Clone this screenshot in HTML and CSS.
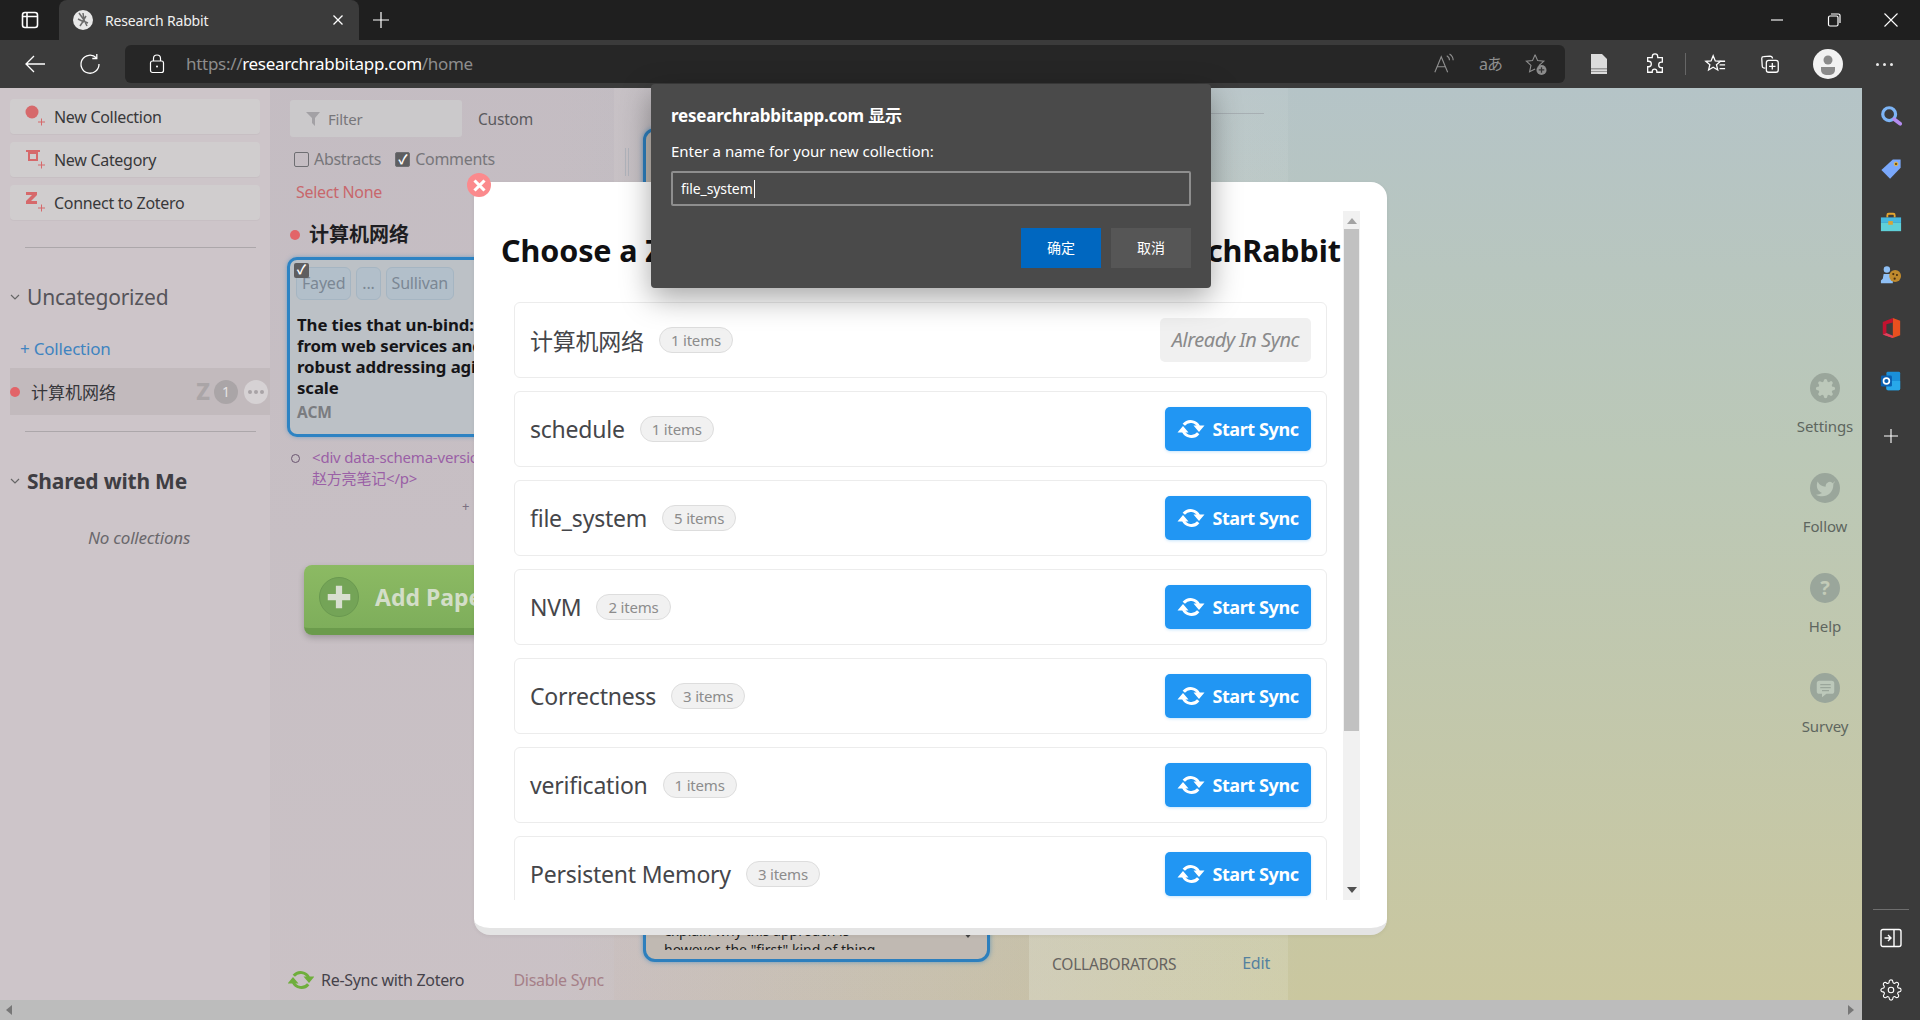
FILE: index.html
```html
<!DOCTYPE html>
<html lang="en">
<head>
<meta charset="utf-8">
<title>Research Rabbit</title>
<link rel="stylesheet" href="styles.css">
</head>
<body>
<svg class="defs" width="0" height="0" aria-hidden="true">
  <symbol id="sync" viewBox="-1 0 26 24">
    <path d="M4.800 7.800A8.800 8.800 0 0 1 19.800 10M19.200 16.200A8.800 8.800 0 0 1 4.200 14" fill="none" stroke="currentColor" stroke-width="3"/>
    <path d="M14.500 8.500h11l-5.500 6.500zM-1.500 15.500h11l-5.500-6.500z" fill="currentColor"/>
  </symbol>
  <symbol id="gear" viewBox="0 0 24 24">
    <path d="M12 15a3 3 0 1 0 0-6 3 3 0 0 0 0 6z"/>
    <path d="M19.400 15a1.650 1.650 0 0 0 .33 1.820l.06.06a2 2 0 0 1 0 2.830 2 2 0 0 1-2.830 0l-.06-.06a1.650 1.650 0 0 0-1.820-.33 1.650 1.650 0 0 0-1 1.510V21a2 2 0 0 1-2 2 2 2 0 0 1-2-2v-.09A1.650 1.650 0 0 0 9 19.400a1.650 1.650 0 0 0-1.820.33l-.06.06a2 2 0 0 1-2.830 0 2 2 0 0 1 0-2.830l.06-.06a1.650 1.650 0 0 0 .33-1.820 1.650 1.650 0 0 0-1.510-1H3a2 2 0 0 1-2-2 2 2 0 0 1 2-2h.09A1.650 1.650 0 0 0 4.600 9a1.650 1.650 0 0 0-.33-1.820l-.06-.06a2 2 0 0 1 0-2.830 2 2 0 0 1 2.830 0l.06.06a1.650 1.650 0 0 0 1.820.33H9a1.650 1.650 0 0 0 1-1.510V3a2 2 0 0 1 2-2 2 2 0 0 1 2 2v.09a1.650 1.650 0 0 0 1 1.510 1.650 1.650 0 0 0 1.820-.33l.06-.06a2 2 0 0 1 2.830 0 2 2 0 0 1 0 2.830l-.06.06a1.650 1.650 0 0 0-.33 1.820V9a1.650 1.650 0 0 0 1.510 1H21a2 2 0 0 1 2 2 2 2 0 0 1-2 2h-.09a1.650 1.650 0 0 0-1.510 1z"/>
  </symbol>
</svg>

<header class="tabstrip">
  <svg class="ic tab-actions" viewBox="0 0 20 20"><rect x="2.500" y="2.500" width="15" height="15" rx="2.500" stroke-width="1.600"/><path d="M7 3v14M3 6.500h14" stroke-width="1.600"/></svg>
  <div class="tab">
    <svg class="favicon" viewBox="0 0 20 20"><circle cx="10" cy="10" r="10" fill="#e8e8e8"/><path d="M6 3l5 7 3 6M10 3l1 7-4 6M13 6l-3 5 5 2M5 9l6 3" stroke="#6d6d6d" stroke-width="1.500" fill="none"/></svg>
    <span class="tab-title">Research Rabbit</span>
    <svg class="ic tab-close" viewBox="0 0 12 12"><path d="M1.500 1.500l9 9M10.500 1.500l-9 9" stroke-width="1.300"/></svg>
  </div>
  <svg class="ic new-tab" viewBox="0 0 18 18"><path d="M9 1v16M1 9h16" stroke-width="1.200"/></svg>
  <div class="window-controls">
    <svg class="ic win" viewBox="0 0 16 16"><path d="M2 8h12" stroke-width="1.100"/></svg>
    <svg class="ic win" viewBox="0 0 16 16"><rect x="2.500" y="4" width="9.500" height="10" rx="1.500"/><path d="M5 2h7.500a1.500 1.500 0 0 1 1.500 1.500V11"/></svg>
    <svg class="ic win" viewBox="0 0 16 16"><path d="M1.500 1.500l13 13M14.500 1.500l-13 13" stroke-width="1.100"/></svg>
  </div>
</header>

<nav class="toolbar">
  <svg class="ic back" viewBox="0 0 22 22"><path d="M21 11H2M10 3l-8 8 8 8" stroke-width="1.300"/></svg>
  <svg class="ic reload" viewBox="0 0 22 22"><path d="M17.500 5A9 9 0 1 0 20 11" stroke-width="1.300"/><path d="M17.800 1v4.500h-4.500" stroke-width="1.300"/></svg>
  <div class="addressbar">
    <svg class="ic lock" viewBox="0 0 16 20"><rect x="1.500" y="7" width="13" height="11.500" rx="2"/><path d="M4.500 7V4.500a3.500 3.500 0 0 1 7 0V7" /><circle cx="8" cy="12.500" r="1" fill="#fff" stroke="none"/></svg>
    <span class="url"><span class="url-dim">https://</span>researchrabbitapp.com<span class="url-dim">/home</span></span>
    <div class="addr-icons">
      <svg class="ic dim read" viewBox="0 0 24 24"><path d="M2 21L9 4l7 17M4.500 15h9"/><path d="M15 3c2 1 3 3 3 5M18 1c2.500 1.500 4 4 4 7"/></svg>
      <span class="translate">aあ</span>
      <svg class="ic dim star" viewBox="0 0 24 24"><path d="M11 2l2.800 6.300 6.700.7-5 4.600 1 4.400M11 2L8.200 8.300 1.500 9l5 4.600L5 20.500l6-3"/><circle cx="18" cy="18.500" r="5.500" fill="#8c8c8c" stroke="none"/><path d="M18 15.500v6M15 18.500h6" stroke="#333" stroke-width="1.400"/></svg>
    </div>
  </div>
  <div class="tools">
    <svg class="tool doc" viewBox="0 0 18 22"><path d="M1 1h11l5 5v15H1z" fill="#dcdcdc"/><path d="M1 15h16v1.500H1zM1 18h16v1H1z" fill="#9a9a9a"/></svg>
    <svg class="ic tool puzzle" viewBox="0 0 24 24"><path d="M9 4a3 3 0 0 1 6 0v1h5v5h-1a3 3 0 0 0 0 6h1v5h-6v-1a2.500 2.500 0 0 0-5 0v1H4v-6h1a3 3 0 0 0 0-6H4V5h5z" stroke-width="1.400"/></svg>
    <span class="tool-sep"></span>
    <svg class="ic tool favs" viewBox="0 0 24 24"><path d="M10 3l2.300 5.600 5.700.5-4.400 3.700 1.400 5.700-5-3-5 3 1.400-5.700L2 9.100l5.700-.5zM17 9h6M17 13h6M17 17h6" stroke-width="1.400"/></svg>
    <svg class="ic tool colls" viewBox="0 0 24 24"><path d="M7 16.500l-2-.3A2 2 0 0 1 3.500 14L3 6a2 2 0 0 1 2-2l7-.5c1.500 0 2.500.8 2.800 2.500" stroke-width="1.400"/><rect x="8" y="8" width="13" height="13" rx="2.500" stroke-width="1.400"/><path d="M14.500 11v7M11 14.500h7" stroke-width="1.400"/></svg>
    <svg class="avatar" viewBox="0 0 30 30"><circle cx="15" cy="15" r="15" fill="#f2f2f2"/><circle cx="15" cy="11" r="4.500" fill="#8a8a8a"/><path d="M8 18h14v3a5 5 0 0 1-5 5h-4a5 5 0 0 1-5-5z" fill="#8a8a8a"/></svg>
    <span class="more"><i></i><i></i><i></i></span>
  </div>
</nav>

<div class="workspace">
  <div class="viewport">
    <main class="panels">
      <aside class="col-nav">
        <div class="nav-actions">
          <button class="nav-btn"><svg viewBox="0 0 22 22" class="nav-ic"><circle cx="8" cy="8" r="6.500" fill="#d6696b"/><path d="M14 18h7M17.500 14.500v7" stroke="#d6696b" fill="none"/></svg>New Collection</button>
          <button class="nav-btn"><svg viewBox="0 0 22 22" class="nav-ic"><path d="M2 3h14v2H14v9H4V5H2z M6 7v5h6V7z" fill="#d6696b" fill-rule="evenodd"/><path d="M14 18h7M17.500 14.500v7" stroke="#d6696b" fill="none"/></svg>New Category</button>
          <button class="nav-btn"><svg viewBox="0 0 22 22" class="nav-ic"><path d="M2 2h11v3L7 11h6v3H2v-3l6-6H2z" fill="#d6696b"/><path d="M14 18h7M17.500 14.500v7" stroke="#d6696b" fill="none"/></svg>Connect to Zotero</button>
        </div>
        <hr class="nav-rule first-rule">
        <h3 class="nav-head"><svg class="chev" viewBox="0 0 10 6"><path d="M1 1l4 4 4-4"/></svg>Uncategorized</h3>
        <a class="add-coll">+ Collection</a>
        <div class="coll-row">
          <span class="coll-dot"></span>
          <span class="coll-name">计算机网络</span>
          <b class="coll-z">Z</b>
          <span class="coll-count">1</span>
          <span class="coll-more"><i></i><i></i><i></i></span>
        </div>
        <hr class="nav-rule">
        <h3 class="nav-head shared"><svg class="chev" viewBox="0 0 10 6"><path d="M1 1l4 4 4-4"/></svg>Shared with Me</h3>
        <p class="no-colls">No collections</p>
      </aside>

      <section class="col-papers">
        <div class="filter-row">
          <div class="filter"><svg class="funnel" viewBox="0 0 14 14"><path d="M0 0h14L9 6v8L6 11V6z"/></svg>Filter</div>
          <span class="custom">Custom</span>
        </div>
        <div class="check-row">
          <label class="chk"><span class="box"></span>Abstracts</label>
          <label class="chk"><span class="box on">✓</span>Comments</label>
        </div>
        <a class="select-none">Select None</a>
        <h2 class="coll-title"><span class="coll-dot"></span>计算机网络</h2>
        <article class="paper">
          <span class="box on paper-check">✓</span>
          <div class="authors"><span>Fayed</span><span>...</span><span>Sullivan</span></div>
          <div class="paper-title">The ties that un-bind: decoupling IP<br>from web services and sockets for<br>robust addressing agility at CDN-<br>scale</div>
          <div class="paper-venue">ACM</div>
        </article>
        <div class="comment"><span class="ring"></span><p>&lt;div data-schema-version="8"&gt;&lt;p&gt;<br>赵方亮笔记&lt;/p&gt;</p></div>
        <div class="plus-row">+</div>
        <button class="add-paper"><span class="add-circle"><svg viewBox="0 0 24 24"><path d="M12 3v18M3 12h18"/></svg></span>Add Papers</button>
        <footer class="papers-foot">
          <svg class="resync"><use href="#sync"/></svg>
          <span class="resync-text">Re-Sync with Zotero</span>
          <a class="disable">Disable Sync</a>
        </footer>
      </section>

      <section class="col-detail">
        <div class="grip"></div>
        <article class="detail-card">
          <div class="detail-text">explain why this approach is<br>however, the "first" kind of thing</div>
          <span class="card-arrow"></span>
        </article>
      </section>

      <section class="col-info">
        <hr class="info-rule">
        <div class="collab"><span>COLLABORATORS</span><a>Edit</a></div>
      </section>

      <aside class="col-help">
        <div class="help-item">
          <span class="help-ic"><svg viewBox="0 0 24 24"><use href="#gear"/></svg></span>Settings
        </div>
        <div class="help-item">
          <span class="help-ic"><svg viewBox="0 0 24 24"><path d="M23 3a10.900 10.900 0 0 1-3 3 4.480 4.480 0 0 0-7.860 3v1A10.660 10.660 0 0 1 3 4s-4 9 5 13a11.640 11.640 0 0 1-7 2c9 5 20 0 20-11.500a4.500 4.500 0 0 0-.08-.83A7.720 7.720 0 0 0 23 3z"/></svg></span>Follow
        </div>
        <div class="help-item">
          <span class="help-ic q">?</span>Help
        </div>
        <div class="help-item">
          <span class="help-ic"><svg viewBox="0 0 24 24"><path d="M5 3h14a3 3 0 0 1 3 3v9a3 3 0 0 1-3 3h-6l-5 4v-4H5a3 3 0 0 1-3-3V6a3 3 0 0 1 3-3z"/><path class="lines" d="M6 7.500h12M6 11h12M8 14.500h8"/></svg></span>Survey
        </div>
      </aside>
    </main>
    <div class="hscroll">
      <span class="arrow-left"></span>
      <span class="arrow-right"></span>
    </div>

    <div class="modal">
      <button class="modal-close"><svg viewBox="0 0 12 12"><path d="M2 2l8 8M10 2l-8 8"/></svg></button>
      <div class="modal-scroll">
        <div class="modal-list">
          <h1 class="modal-title">Choose a Zotero Collection to Sync with ResearchRabbit</h1>
          <div class="sync-row"><span class="sync-name">计算机网络</span><span class="pill">1 items</span><span class="in-sync">Already In Sync</span></div>
          <div class="sync-row"><span class="sync-name">schedule</span><span class="pill">1 items</span><button class="start"><svg><use href="#sync"/></svg>Start Sync</button></div>
          <div class="sync-row"><span class="sync-name">file_system</span><span class="pill">5 items</span><button class="start"><svg><use href="#sync"/></svg>Start Sync</button></div>
          <div class="sync-row"><span class="sync-name">NVM</span><span class="pill">2 items</span><button class="start"><svg><use href="#sync"/></svg>Start Sync</button></div>
          <div class="sync-row"><span class="sync-name">Correctness</span><span class="pill">3 items</span><button class="start"><svg><use href="#sync"/></svg>Start Sync</button></div>
          <div class="sync-row"><span class="sync-name">verification</span><span class="pill">1 items</span><button class="start"><svg><use href="#sync"/></svg>Start Sync</button></div>
          <div class="sync-row"><span class="sync-name">Persistent Memory</span><span class="pill">3 items</span><button class="start"><svg><use href="#sync"/></svg>Start Sync</button></div>
        </div>
        <div class="vscroll">
          <span class="arrow-up"></span>
          <span class="thumb"></span>
          <span class="arrow-down"></span>
        </div>
      </div>
    </div>
  </div>

  <aside class="edge-bar">
    <svg class="edge" viewBox="0 0 24 24"><circle cx="10" cy="10" r="7" fill="none" stroke="#7db4f5" stroke-width="3.500"/><path d="M15.500 15.500l6.500 5" stroke="#b48cf0" stroke-width="4" stroke-linecap="round"/></svg>
    <svg class="edge" viewBox="0 0 24 24"><path d="M14 1.500h8.500v9L11 22.500 1.500 13z" fill="#7aa8fb"/><circle cx="17.500" cy="6.500" r="2" fill="#7a5a10" stroke="#f2c14e"/></svg>
    <svg class="edge" viewBox="0 0 24 24"><path d="M8 7V4.500a1.500 1.500 0 0 1 1.500-1.500h5A1.500 1.500 0 0 1 16 4.500V7" fill="none" stroke="#e3a52f" stroke-width="2"/><rect x="1" y="7" width="22" height="6" fill="#45b8e0"/><rect x="1" y="13" width="22" height="9" fill="#5fd0d8"/><rect x="9" y="11" width="5" height="4" fill="#d9a437"/></svg>
    <svg class="edge" viewBox="0 0 24 24"><circle cx="7.500" cy="6" r="3.500" fill="#8fc0f5"/><path d="M4 11h7l1 5 2 2v3H1v-3l2-2z" fill="#8fc0f5"/><circle cx="16.500" cy="13" r="6.500" fill="#c08a2d"/><circle cx="14.500" cy="11" r="1.200" fill="#4a2f10"/><circle cx="18.500" cy="12" r="1.200" fill="#4a2f10"/><circle cx="16" cy="16" r="1.200" fill="#4a2f10"/></svg>
    <svg class="edge" viewBox="0 0 24 24"><path d="M14 1l8 3v16l-8 3-11-4 11 1.500z" fill="#e8501f"/><path d="M14 1L3 5.500V19l4-1.500V8l7-2z" fill="#c4122f"/><path d="M3 19l11 4v-2.500L7 17.500z" fill="#e0405f"/></svg>
    <svg class="edge" viewBox="0 0 24 24"><rect x="7" y="2" width="15" height="20" rx="1.500" fill="#1a8fd8"/><path d="M7 12l15 0v8.500a1.500 1.500 0 0 1-1.500 1.500H8.500A1.500 1.500 0 0 1 7 20.500z" fill="#28a8ea"/><rect x="1" y="6" width="12" height="12" rx="1.500" fill="#0a5fb0"/><circle cx="7" cy="12" r="3.200" fill="none" stroke="#fff" stroke-width="1.800"/></svg>
    <svg class="ic edge-add" viewBox="0 0 16 16"><path d="M8 1v14M1 8h14" stroke-width="1.100"/></svg>
    <span class="edge-spacer"></span>
    <hr class="edge-rule">
    <svg class="ic edge-tool" viewBox="0 0 22 20"><rect x="1" y="1.500" width="20" height="17" rx="2" stroke-width="1.400"/><path d="M14 1.500v17M4.500 10h6M8 7l3 3-3 3" stroke-width="1.400"/></svg>
    <svg class="ic edge-gear" viewBox="0 0 24 24"><use href="#gear"/></svg>
  </aside>
</div>

<div class="js-dialog" role="dialog">
  <div class="js-title">researchrabbitapp.com 显示</div>
  <div class="js-msg">Enter a name for your new collection:</div>
  <div class="js-input">file_system<span class="caret"></span></div>
  <div class="js-buttons">
    <button class="js-btn primary">确定</button>
    <button class="js-btn">取消</button>
  </div>
</div>
</body>
</html>
```

FILE: styles.css
```css
* { box-sizing: border-box; }
html, body { height: 100%; }
body {
  margin: 0;
  position: relative;
  overflow: hidden;
  display: flex;
  flex-direction: column;
  font-family: "Noto Sans", "Noto Sans CJK SC", sans-serif;
  background: #3b3b3b;
  color: #333;
}
button { font-family: inherit; border: 0; padding: 0; }
hr { margin: 0; border: 0; }
p, h1, h2, h3 { margin: 0; }
.defs { position: absolute; }
.ic { fill: none; stroke: #fff; stroke-width: 1.200; flex: none; }
.ic.dim { stroke: #8f8f8f; }

/* browser chrome */
.tabstrip { height: 40px; flex: none; background: #1f1f1f; display: flex; align-items: center; padding-left: 20px; color: #fff; }
.tab-actions { width: 20px; height: 20px; margin-right: 19px; }
.tab { width: 300px; height: 40px; background: #3b3b3b; border-radius: 8px 8px 0 0; display: flex; align-items: center; padding-left: 14px; }
.favicon { width: 20px; height: 20px; margin-right: 12px; flex: none; }
.tab-title { font-size: 14px; letter-spacing: -.18px; color: #f0f0f0; }
.tab-close { width: 12px; height: 12px; margin-left: auto; margin-right: 15px; }
.new-tab { width: 18px; height: 18px; margin-left: 13px; }
.window-controls { margin-left: auto; display: flex; gap: 41px; padding-right: 21px; }
.win { width: 16px; height: 16px; }

.toolbar { height: 48px; flex: none; background: #3b3b3b; display: flex; align-items: center; padding-left: 24px; }
.back { width: 22px; height: 22px; margin-right: 33px; }
.reload { width: 22px; height: 22px; margin-right: 24px; }
.addressbar { width: 1440px; height: 38px; background: #262626; border-radius: 6px; display: flex; align-items: center; padding-left: 24px; flex: none; }
.lock { width: 16px; height: 20px; margin-right: 21px; }
.url { font-size: 17px; letter-spacing: -.3px; color: #fff; padding-bottom: 2px; }
.url-dim { color: #8d8d8d; }
.addr-icons { margin-left: auto; display: flex; align-items: center; gap: 24px; padding-right: 18px; }
.read, .star { width: 22px; height: 22px; }
.translate { font-size: 16px; color: #8f8f8f; line-height: 22px; letter-spacing: -1px; width: 22px; white-space: nowrap; }
.tools { display: flex; align-items: center; flex: 1; padding-left: 25px; }
.tool { width: 22px; height: 22px; flex: none; }
.doc { width: 18px; }
.puzzle { margin-left: 36px; }
.tool-sep { width: 1px; height: 22px; background: #666; margin-left: 19px; }
.favs { margin-left: 18px; }
.colls { margin-left: 33px; }
.avatar { width: 30px; height: 30px; margin-left: 32px; flex: none; }
.more { display: flex; gap: 4px; margin-left: 33px; }
.more i { width: 3px; height: 3px; background: #e8e8e8; border-radius: 50%; }

/* layout */
.workspace { flex: 1; min-height: 0; display: flex; }
.viewport { flex: 1; min-width: 0; position: relative; display: flex; flex-direction: column; }
.panels {
  flex: 1; min-height: 0; display: flex;
  background:
    linear-gradient(to right, #cdc5c9 0, #cdc5c9 30%, rgba(205,197,201,0) 70%),
    linear-gradient(to bottom, #b5c4c7 0, #bbc8b7 40%, #cac79f 100%);
}
.col-nav { width: 270px; flex: none; padding: 11px 0 0 10px; }
.col-papers { width: 344px; flex: none; padding: 12px 0 0 20px; position: relative; background: linear-gradient(to bottom, rgba(30,30,70,.05), rgba(60,20,20,.02)); }
.col-detail { width: 415px; flex: none; position: relative; padding-left: 29px; background: linear-gradient(to bottom, rgba(0,0,30,.02), rgba(120,60,20,.04)); }
.col-info { width: 259px; flex: none; position: relative; background: linear-gradient(to bottom, rgba(255,255,255,.06), rgba(255,255,255,.12)); }
.col-help { flex: 1; padding: 285px 0 0 0; display: flex; flex-direction: column; align-items: flex-end; }
.hscroll { height: 20px; flex: none; background: #bcbcbc; display: flex; align-items: center; justify-content: space-between; padding: 0 8px 0 6px; }
.arrow-left { border: 5px solid transparent; border-left: 0; border-right: 6px solid #777; }
.arrow-right { border: 5px solid transparent; border-right: 0; border-left: 6px solid #777; }

/* left nav */
.nav-actions { display: flex; flex-direction: column; gap: 8px; width: 250px; }
.nav-btn { height: 35px; background: #d0cdce; border-radius: 4px; display: flex; align-items: center; gap: 8px; padding-left: 14px; font-size: 16px; letter-spacing: -.3px; color: #38383a; text-align: left; box-shadow: 0 1px 1px rgba(0,0,0,.03); }
.nav-ic { width: 22px; height: 22px; flex: none; margin-top: -3px; }
.nav-rule { width: 231px; height: 1px; background: #aca7aa; margin-left: 15px; }
.first-rule { margin-top: 27px; }
.nav-head { font-size: 21px; line-height: 28px; font-weight: 400; color: #55545a; margin-top: 35px; display: flex; align-items: center; letter-spacing: -.2px; }
.chev { width: 10px; height: 6px; fill: none; stroke: #666; stroke-width: 1.200; margin-right: 7px; }
.add-coll { display: block; font-size: 17px; line-height: 22px; color: #3f84c0; margin: 27px 0 0 10px; letter-spacing: -.2px; }
.coll-row { height: 47px; margin-top: 8px; background: #c2babd; display: flex; align-items: center; position: relative; }
.coll-dot { width: 10px; height: 10px; border-radius: 50%; background: #e26468; flex: none; }
.coll-name { font-size: 17px; color: #36363a; margin-left: 11px; }
.coll-z { margin-left: auto; font-size: 23px; color: #aaa5a7; font-weight: 800; line-height: 1; }
.coll-count { width: 24px; height: 24px; border-radius: 50%; background: #aaa5a7; color: #e5e2e3; font-size: 14px; text-align: center; line-height: 24px; margin-left: 4px; }
.coll-more { width: 24px; height: 24px; border-radius: 50%; background: #d6d2d4; margin: 0 2px 0 6px; display: flex; align-items: center; justify-content: center; gap: 2px; }
.coll-more i { width: 4px; height: 4px; border-radius: 50%; background: #a8a3a6; }
.col-nav .coll-row + .nav-rule { margin-top: 16px; }
.shared { font-weight: 700; font-size: 21px; margin-top: 35px; color: #3f3e43; }
.no-colls { font-style: italic; font-size: 17px; text-align: center; color: #6a686c; margin-top: 31px; padding-right: 2px; letter-spacing: -.2px; }

/* papers */
.filter-row { display: flex; align-items: center; }
.filter { width: 172px; height: 37px; background: #cbc9cb; border-radius: 3px; display: flex; align-items: center; padding-left: 16px; font-size: 15px; color: #77767a; letter-spacing: -.2px; }
.funnel { width: 14px; height: 14px; fill: #a3a1a5; margin-right: 8px; }
.custom { font-size: 15.500px; color: #5a5a5e; margin-left: 16px; letter-spacing: -.2px; }
.check-row { display: flex; gap: 14px; margin: 12px 0 0 4px; }
.chk { display: flex; align-items: center; font-size: 16px; line-height: 20px; color: #77767a; letter-spacing: -.3px; }
.box { width: 15px; height: 15px; border: 1px solid #6e6e72; border-radius: 2px; margin-right: 5px; flex: none; color: #fff; font-size: 13px; line-height: 13px; text-align: center; font-weight: 700; }
.box.on { background: #5e5e60; }
.select-none { display: block; font-size: 16px; line-height: 20px; color: #c8676c; margin: 13px 0 0 6px; letter-spacing: -.3px; }
.coll-title { display: flex; align-items: center; font-size: 20px; line-height: 26px; color: #1e1e22; font-weight: 700; margin: 20px 0 0 0; gap: 9px; }
.paper { width: 345px; height: 180px; margin: 9px 0 0 -3px; border: 3px solid #2d83c3; border-radius: 10px; background: #bcc1c6; box-shadow: 0 0 4px rgba(45,131,195,.5); padding: 7px 0 0 6px; position: relative; overflow: hidden; }
.paper-check { position: absolute; left: 4px; top: 3px; margin: 0; border: 0; width: 15px; height: 15px; border-radius: 2px; }
.authors { display: flex; gap: 5px; }
.authors span { height: 33px; border: 1px solid #a5b5c2; background: #b2bfca; border-radius: 6px; font-size: 16px; line-height: 31px; padding: 0 5px; color: #7b8794; letter-spacing: -.2px; }
.paper-title { font-weight: 700; font-size: 16.800px; line-height: 21px; color: #151518; margin: 14px 0 0 1px; white-space: nowrap; letter-spacing: -.1px; }
.paper-venue { font-size: 15.500px; font-weight: 700; color: #7a7c80; margin: 3px 0 0 1px; line-height: 22px; }
.comment { display: flex; margin-top: 10px; padding-left: 1px; }
.ring { width: 9px; height: 9px; border: 1.500px solid #6a5570; border-radius: 50%; margin-top: 7px; flex: none; }
.comment p { font-size: 15px; line-height: 21px; color: #9a5fa6; margin-left: 12px; white-space: nowrap; letter-spacing: -.2px; }
.plus-row { font-size: 13px; line-height: 18px; color: #7a7080; margin: 8px 0 0 172px; }
.add-paper { display: flex; align-items: center; width: 300px; height: 70px; margin: 50px 0 0 14px; background: linear-gradient(#8cba63, #7eae5b); border-radius: 8px; border-bottom: 7px solid #6b9b4c; box-shadow: 0 3px 6px rgba(0,0,0,.2); padding-left: 15px; font-size: 23px; font-weight: 700; color: #d3dec8; }
.add-circle { width: 40px; height: 40px; border-radius: 50%; background: #74a457; border: 1px solid #6a9950; margin-right: 16px; display: flex; align-items: center; justify-content: center; }
.add-circle svg { width: 30px; height: 30px; fill: none; stroke: #d8dfd0; stroke-width: 5; }
.papers-foot { position: absolute; left: 18px; right: 10px; bottom: 8px; display: flex; align-items: center; font-size: 16px; color: #45424a; letter-spacing: -.3px; }
.resync { width: 26px; height: 24px; color: #6fae3c; margin-right: 7px; }
.disable { margin-left: auto; color: #a57f88; }

/* detail */
.grip { position: absolute; left: 11px; top: 60px; width: 4px; height: 28px; border-left: 1px solid #b0b3bb; border-right: 1px solid #b0b3bb; }
.detail-card { position: absolute; left: 29px; right: 39px; top: 40px; bottom: 38px; border: 3px solid #2d7fbd; border-radius: 12px; background: #c0b9b2; box-shadow: 0 0 5px rgba(45,127,189,.6); padding: 0 0 0 18px; display: flex; flex-direction: column; justify-content: flex-end; overflow: hidden; }
.detail-text { font-size: 14px; line-height: 19px; height: 29px; overflow: hidden; color: #201f1f; margin-bottom: 9px; }
.card-arrow { position: absolute; right: 14px; bottom: 21px; border: 5px solid transparent; border-bottom: 0; border-top: 6px solid #444; }

/* info */
.info-rule { position: absolute; left: 0; right: 24px; top: 25px; height: 1px; background: #a7afb3; }
.collab { position: absolute; left: 23px; right: 18px; bottom: 25px; display: flex; justify-content: space-between; font-size: 15.500px; letter-spacing: -.2px; color: #66635f; }
.collab a { color: #54819f; font-size: 16px; line-height: 20px; }

/* help rail */
.help-item { width: 74px; display: flex; flex-direction: column; align-items: center; font-size: 15px; line-height: 22px; color: #5e665f; height: 100px; letter-spacing: -.1px; }
.help-ic { width: 30px; height: 30px; border-radius: 50%; background: #9aa69b; display: flex; align-items: center; justify-content: center; margin-bottom: 12px; flex: none; }
.help-ic svg { width: 21px; height: 21px; fill: #bcc8ba; }
.help-ic svg path.lines { fill: none; stroke: #9aa69b; stroke-width: 1.500; }
.q { color: #c3cbb8; font-weight: 700; font-size: 20px; line-height: 30px; }

/* edge bar */
.edge-bar { width: 58px; flex: none; background: #3b3b3b; display: flex; flex-direction: column; align-items: center; padding: 17px 0 0 0; }
.edge { width: 22px; height: 22px; flex: none; margin-bottom: 31px; }
.edge-add { width: 16px; height: 16px; margin-top: 5px; }
.edge-spacer { flex: 1; }
.edge-rule { width: 36px; height: 1px; background: #6e6e6e; flex: none; }
.edge-tool { width: 22px; height: 20px; margin-top: 18px; }
.edge-gear { width: 22px; height: 22px; margin: 31px 0 19px; }

/* modal */
.modal { position: absolute; left: 474px; top: 94px; width: 913px; height: 753px; background: #fff; border-radius: 16px; border-bottom: 7px solid #e4e4e4; padding: 29px 27px 0 24px; box-shadow: 0 1px 4px rgba(0,0,0,.06); }
.modal-close { position: absolute; left: -7px; top: -9px; width: 24px; height: 24px; border-radius: 50%; background: #fb8a8d; display: flex; align-items: center; justify-content: center; }
.modal-close svg { width: 15px; height: 15px; fill: none; stroke: #fff; stroke-width: 2.500; }
.modal-scroll { display: flex; height: 689px; }
.modal-list { width: 845px; flex: none; overflow: hidden; padding-left: 16px; }
.modal-title { font-size: 30.500px; line-height: 44px; font-weight: 700; color: #101012; margin: 17px 0 30px -13px; white-space: nowrap; letter-spacing: -.1px; }
.sync-row { width: 813px; height: 76px; margin-bottom: 13px; border: 1px solid #ececec; border-radius: 6px; display: flex; align-items: center; padding: 0 15px; flex: none; }
.sync-name { font-size: 23px; color: #45464a; letter-spacing: -.22px; }
.pill { height: 26px; border: 1px solid #ddd; background: #f1f1f1; border-radius: 13px; font-size: 15px; line-height: 24px; color: #8c8c8c; padding: 0 11px; margin-left: 15px; letter-spacing: -.2px; }
.start { margin-left: auto; width: 146px; height: 44px; background: #2196f3; border-radius: 5px; color: #fff; font-size: 18px; font-weight: 700; display: flex; align-items: center; justify-content: center; gap: 7px; letter-spacing: -.4px; box-shadow: 0 1px 3px rgba(33,150,243,.25); }
.start svg { width: 28px; height: 24px; flex: none; }
.in-sync { margin-left: auto; width: 151px; height: 44px; background: #f0f0f0; border-radius: 5px; color: #8a8a8a; font-size: 20px; font-style: italic; line-height: 44px; text-align: center; letter-spacing: -.5px; }
.vscroll { width: 17px; flex: none; background: #f1f1f1; display: flex; flex-direction: column; align-items: center; }
.arrow-up { margin: 7px 0 5px; border: 5px solid transparent; border-top: 0; border-bottom: 6px solid #a3a3a3; }
.thumb { width: 15px; height: 502px; background: #c1c1c1; }
.arrow-down { margin-top: auto; margin-bottom: 7px; border: 5px solid transparent; border-bottom: 0; border-top: 6px solid #505050; }

/* native prompt */
.js-dialog { position: absolute; left: 651px; top: 84px; width: 560px; height: 204px; background: #4a4a4a; border-radius: 4px; padding: 20px; color: #fff; box-shadow: 0 10px 30px rgba(0,0,0,.35); }
.js-title { font-size: 17px; font-weight: 700; line-height: 24px; letter-spacing: -.2px; }
.js-msg { font-size: 15px; line-height: 20px; margin-top: 13px; letter-spacing: 0; }
.js-input { height: 35px; margin-top: 10px; border: 2px solid #8e8e8e; border-radius: 2px; font-size: 14px; line-height: 31px; padding-left: 8px; display: flex; align-items: center; letter-spacing: -.1px; }
.caret { width: 1px; height: 18px; background: #fff; margin-left: 1px; }
.js-buttons { display: flex; justify-content: flex-end; gap: 10px; margin-top: 22px; }
.js-btn { width: 80px; height: 40px; background: #565656; color: #fff; font-size: 14px; padding-bottom: 2px; }
.js-btn.primary { background: #0067c0; }
```
